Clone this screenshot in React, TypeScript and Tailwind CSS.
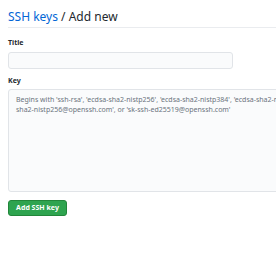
export default function App() {
  return (
    <div className="w-[276px] h-[260px] overflow-hidden bg-white font-['Noto_Sans',sans-serif] text-[#24292e]">
      <div className="w-[320px] pl-2 pt-[9px]">
        <h2 className="text-[12px] leading-[15px] pb-[3px] border-b border-[#eaecef] font-normal">
          <span className="text-[#0366d6]">SSH keys</span> / Add new
        </h2>

        <div className="mt-[10px]">
          <label className="block text-[7px] leading-[10px] font-bold">Title</label>
          <div className="mt-[4px] w-[225px] h-[17px] rounded-[3px] border border-[#e1e4e8] bg-[#fafbfc]"></div>
        </div>

        <div className="mt-[7px]">
          <label className="block text-[7px] leading-[10px] font-bold">Key</label>
          <div className="mt-[3px] w-[300px] h-[103px] rounded-[3px] border border-[#e1e4e8] bg-[#fafbfc] px-[7px] pt-[5px] text-[7px] leading-[10px] text-[#6a737d]">
            <div className="whitespace-nowrap">
              Begins with 'ssh-rsa', 'ecdsa-sha2-nistp256', 'ecdsa-sha2-nistp384', 'ecdsa-sha2-nistp521', 'ssh-ed25519', 'sk-ecdsa-
            </div>
            <div className="whitespace-nowrap">
              sha2-nistp256@openssh.com', or 'sk-ssh-ed25519@openssh.com'
            </div>
          </div>
        </div>

        <button className="block mt-[8px] w-[59px] h-[16px] rounded-[3px] border border-[#22863a] bg-[#2ea44f] text-white text-[7px] leading-[14px] font-bold">
          Add SSH key
        </button>
      </div>
    </div>
  );
}
